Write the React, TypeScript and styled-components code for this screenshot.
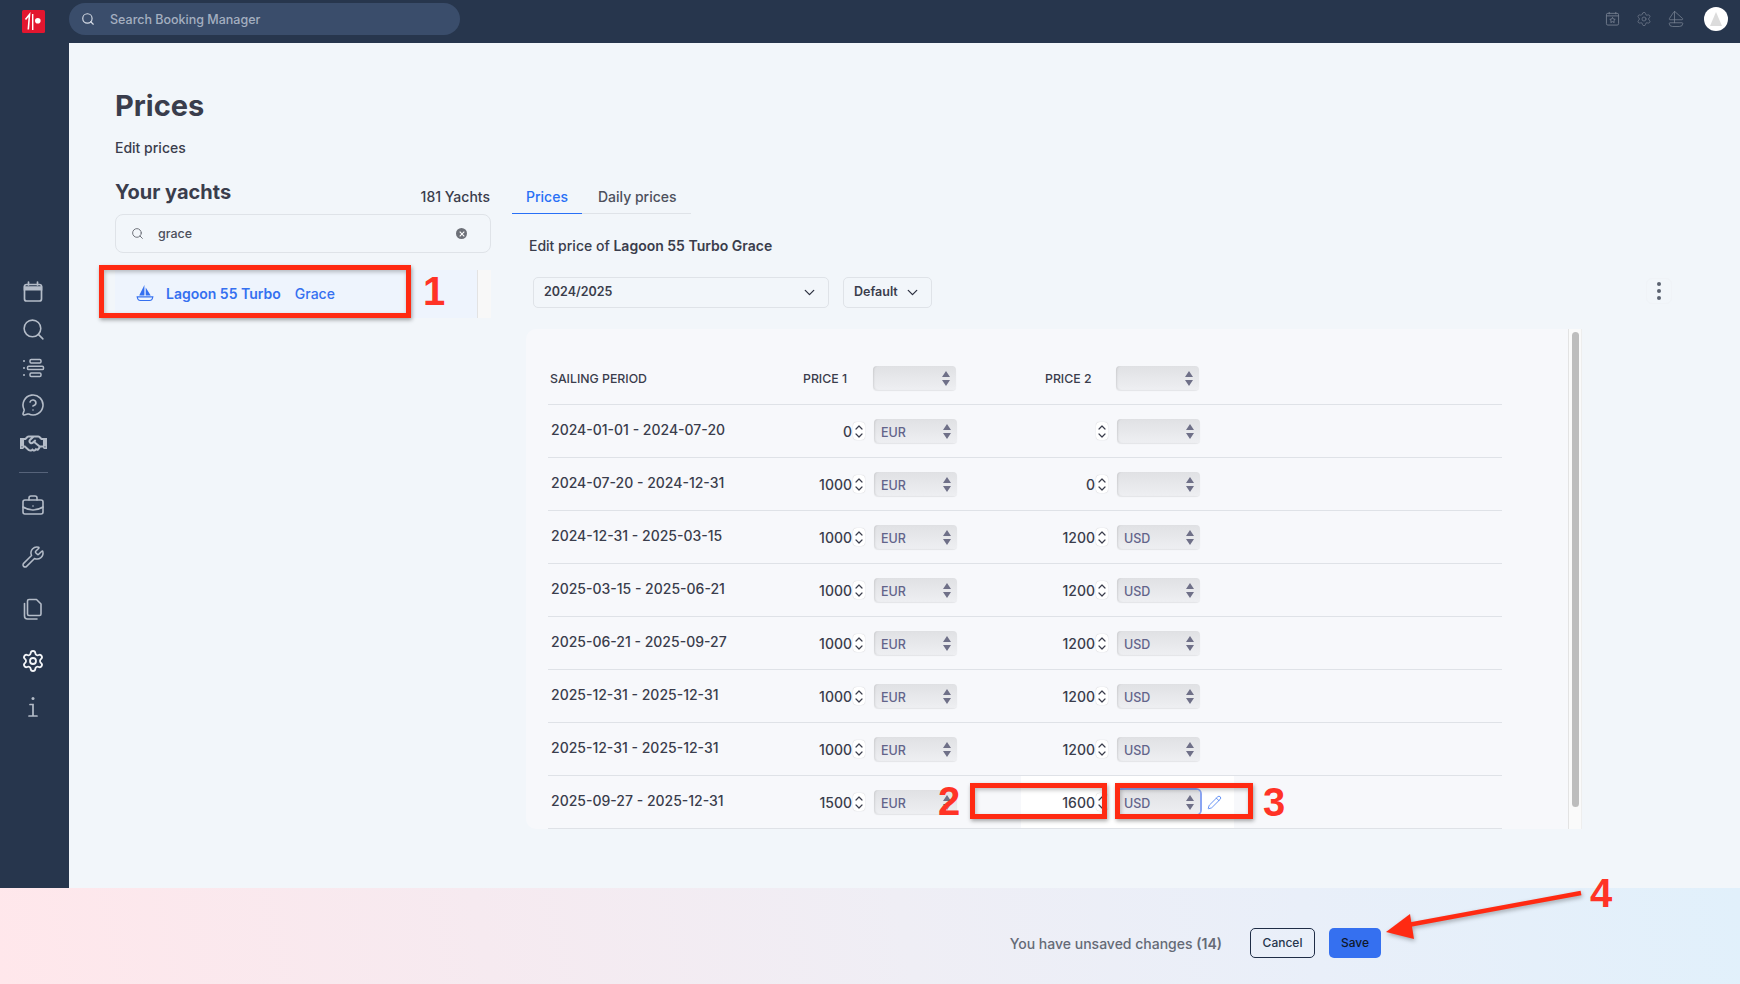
import React from "react";
import styled, { createGlobalStyle } from "styled-components";
import {
  BriefcaseBusiness,
  ChevronDown,
  MessageCircleQuestion,
  Pencil,
  Sailboat,
  Search,
  Settings,
  Wrench,
} from "lucide-react";
import { FaRegHandshake } from "react-icons/fa";

const rows = [
  { period: "2024-01-01 - 2024-07-20", price1: "0", cur1: "EUR", price2: "", cur2: "" },
  { period: "2024-07-20 - 2024-12-31", price1: "1000", cur1: "EUR", price2: "0", cur2: "" },
  { period: "2024-12-31 - 2025-03-15", price1: "1000", cur1: "EUR", price2: "1200", cur2: "USD" },
  { period: "2025-03-15 - 2025-06-21", price1: "1000", cur1: "EUR", price2: "1200", cur2: "USD" },
  { period: "2025-06-21 - 2025-09-27", price1: "1000", cur1: "EUR", price2: "1200", cur2: "USD" },
  { period: "2025-12-31 - 2025-12-31", price1: "1000", cur1: "EUR", price2: "1200", cur2: "USD" },
  { period: "2025-12-31 - 2025-12-31", price1: "1000", cur1: "EUR", price2: "1200", cur2: "USD" },
  { period: "2025-09-27 - 2025-12-31", price1: "1500", cur1: "EUR", price2: "1600", cur2: "USD", active: true },
];

const GlobalStyle = createGlobalStyle`
  * { box-sizing: border-box; }
  html, body { margin: 0; padding: 0; }
  body {
    font-family: "Inter", "Liberation Sans", sans-serif;
    color: #3a3d4c;
    background: #f2f6fa;
  }
`;

const CalendarIcon = () => (
  <svg width="24" height="24" viewBox="0 0 24 24" fill="none" stroke="currentColor" strokeWidth="1.7">
    <rect x="3.5" y="4.5" width="17" height="16.5" rx="2" />
    <path d="M3.5 7h17v2.6h-17z" fill="currentColor" />
    <path d="M7.5 2v3M16.5 2v3" strokeLinecap="round" />
  </svg>
);

const ListIcon = () => (
  <svg width="24" height="24" viewBox="0 0 24 24" fill="none" stroke="currentColor" strokeWidth="1.5">
    <rect x="9" y="3.5" width="11" height="3.4" rx="1.2" />
    <rect x="6.5" y="10.2" width="16" height="3.4" rx="1.2" />
    <rect x="9" y="17" width="11" height="3.4" rx="1.2" />
    <circle cx="3" cy="5" r="1" fill="currentColor" stroke="none" />
    <circle cx="3" cy="12" r="1" fill="currentColor" stroke="none" />
    <circle cx="3" cy="19" r="1" fill="currentColor" stroke="none" />
  </svg>
);

const FilesIcon = () => (
  <svg width="24" height="24" viewBox="0 0 24 24" fill="none" stroke="currentColor" strokeWidth="1.6" strokeLinejoin="round">
    <path d="M8 2.5h7.5l4.5 4.5v10a1.5 1.5 0 0 1-1.5 1.5H8A1.5 1.5 0 0 1 6.5 17V4A1.5 1.5 0 0 1 8 2.5z" />
    <path d="M3.5 6.5V19a3 3 0 0 0 3 3H16" strokeLinecap="round" />
  </svg>
);

const InfoIcon = () => (
  <svg width="24" height="24" viewBox="0 0 24 24" fill="none" stroke="currentColor" strokeWidth="1.7" strokeLinecap="round">
    <circle cx="12" cy="3.6" r="1.5" fill="currentColor" stroke="none" />
    <path d="M9 9.5h3V21M8 21h8" />
  </svg>
);

const BoatFilled = () => (
  <svg width="18" height="18" viewBox="0 0 18 18" fill="#3570f0">
    <path d="M8.4 1L8.4 11.5H3.2zM9.7 3.5l5 8H9.7z" />
    <path d="M1.2 12.8h15.6c-.3 2.5-1.5 3.7-3.2 3.7H4.4c-1.7 0-2.9-1.2-3.2-3.7z" fill="none" stroke="#3570f0" strokeWidth="1.2" />
  </svg>
);

const CalendarStar = () => (
  <svg width="15" height="15" viewBox="0 0 16 16" fill="none" stroke="currentColor" strokeWidth="0.9">
    <rect x="1.5" y="2.5" width="13" height="12.5" rx="1.5" />
    <path d="M1.5 5.2h13M4.5 1v2.5M11.5 1v2.5" />
    <path d="M8 6.8l.9 1.8 2 .3-1.45 1.4.35 2L8 11.35l-1.8.95.35-2L5.1 8.9l2-.3z" />
  </svg>
);

const Arrows = () => (
  <svg width="8" height="15" viewBox="0 0 8 15" fill="#6f7088">
    <path d="M4 0l4 6H0zM4 15L0 9h8z" />
  </svg>
);

const Spin = () => (
  <Spinner>
    <svg width="10" height="17" viewBox="0 0 10 17" fill="none" stroke="#3a3d4c" strokeWidth="1.2" strokeLinecap="round" strokeLinejoin="round">
      <path d="M2 6l3-3 3 3M2 11l3 3 3-3" />
    </svg>
  </Spinner>
);

const Select = ({ label, focused }: { label?: string; focused?: boolean }) => (
  <SelectBox $focused={focused}>
    <span>{label}</span>
    <Arrows />
  </SelectBox>
);

export default function App() {
  return (
    <Page>
      <GlobalStyle />
      <TopBar>
        <LogoSlot>
          <svg width="23" height="23" viewBox="0 0 23 23">
            <rect width="23" height="23" rx="1.5" fill="#e3162f" />
            <path d="M3.5 9.5L7.5 4.500L6.300 19.500" fill="none" stroke="#fff" strokeWidth="1.6" />
            <path d="M10.700 4v16" stroke="#fff" strokeWidth="1.4" />
            <circle cx="15.800" cy="10.700" r="2.800" fill="#fff" />
          </svg>
        </LogoSlot>
        <GlobalSearch>
          <Search size={14} strokeWidth={2} color="#d5dbe5" />
          <span>Search Booking Manager</span>
        </GlobalSearch>
        <TopIcons>
          <TopIcon><CalendarStar /></TopIcon>
          <TopIcon><Settings size={16} strokeWidth={1} /></TopIcon>
          <TopIcon><Sailboat size={18} strokeWidth={1} /></TopIcon>
          <Avatar>
            <svg width="12" height="14" viewBox="0 0 12 14" fill="#dcdcdc"><path d="M6 0l6 14H0z" /></svg>
          </Avatar>
        </TopIcons>
      </TopBar>

      <Body>
        <SideNav>
          <NavItem $gap={0}><CalendarIcon /></NavItem>
          <NavItem $gap={13}><Search size={25} strokeWidth={1.5} /></NavItem>
          <NavItem $gap={15}><ListIcon /></NavItem>
          <NavItem $gap={13}><MessageCircleQuestion size={24} strokeWidth={1.6} /></NavItem>
          <NavItem $gap={14}><FaRegHandshake size={27} /></NavItem>
          <NavDivider />
          <NavItem $gap={21}><BriefcaseBusiness size={24} strokeWidth={1.6} /></NavItem>
          <NavItem $gap={27}><Wrench size={24} strokeWidth={1.5} /></NavItem>
          <NavItem $gap={28}><FilesIcon /></NavItem>
          <NavItem $gap={28} $bright><Settings size={24} strokeWidth={1.8} /></NavItem>
          <NavItem $gap={22}><InfoIcon /></NavItem>
        </SideNav>

        <Main>
          <Title>Prices</Title>
          <Subtitle>Edit prices</Subtitle>
          <Columns>
            <LeftColumn>
              <YachtsHeader>
                <YachtsTitle>Your yachts</YachtsTitle>
                <YachtsCount>181 Yachts</YachtsCount>
              </YachtsHeader>
              <YachtSearch>
                <Search size={13} strokeWidth={1.8} color="#6d7078" />
                <span>grace</span>
                <ClearIcon>
                  <svg width="6" height="6" viewBox="0 0 6 6" stroke="#fff" strokeWidth="1.1"><path d="M.7.7l4.6 4.6M5.3.7L.7 5.3" /></svg>
                </ClearIcon>
              </YachtSearch>
              <YachtRow>
                <BoatFilled />
                <YachtModel>Lagoon 55 Turbo</YachtModel>
                <YachtName>Grace</YachtName>
                <ListStrip />
              </YachtRow>
            </LeftColumn>

            <RightColumn>
              <Tabs>
                <Tab $active>Prices</Tab>
                <Tab>Daily prices</Tab>
              </Tabs>
              <EditHeading>Edit price of <strong>Lagoon 55 Turbo Grace</strong></EditHeading>
              <Filters>
                <YearSelect>
                  <span>2024/2025</span>
                  <ChevronDown size={17} strokeWidth={1.8} color="#2c3040" />
                </YearSelect>
                <TypeSelect>
                  <span>Default</span>
                  <ChevronDown size={17} strokeWidth={1.8} color="#2c3040" />
                </TypeSelect>
                <Kebab>
                  <Dot />
                  <Dot />
                  <Dot />
                </Kebab>
              </Filters>

              <TableCard>
                <TableArea>
                  <HeaderRow>
                    <HeadPeriod>SAILING PERIOD</HeadPeriod>
                    <HeadPrice>PRICE 1</HeadPrice>
                    <Select />
                    <HeadPrice2>PRICE 2</HeadPrice2>
                    <Select />
                  </HeaderRow>
                  {rows.map((row, i) => (
                    <PriceRow key={i}>
                      <Period>{row.period}</Period>
                      <Amount $width={61}>{row.price1}</Amount>
                      <Spin />
                      <Select label={row.cur1} />
                      <SecondPrice $active={row.active}>
                        <Amount $width={74}>{row.price2}</Amount>
                        <Spin />
                        <Select label={row.cur2} focused={row.active} />
                        {row.active && (
                          <PencilSlot>
                            <Pencil size={15} strokeWidth={1.2} color="#3570f0" />
                          </PencilSlot>
                        )}
                      </SecondPrice>
                    </PriceRow>
                  ))}
                </TableArea>
                <ScrollTrack>
                  <ScrollThumb />
                </ScrollTrack>
              </TableCard>
            </RightColumn>
          </Columns>
        </Main>
      </Body>

      <Footer>
        <Unsaved>You have unsaved changes <b>(14)</b></Unsaved>
        <CancelButton>Cancel</CancelButton>
        <SaveButton>Save</SaveButton>
      </Footer>

      <RedBox $x={99} $y={265} $w={312} $h={53} />
      <RedBox $x={970} $y={783} $w={137} $h={36} />
      <RedBox $x={1115} $y={783} $w={138} $h={36} />
      <RedDigit $x={423} $y={268}>1</RedDigit>
      <RedDigit $x={938} $y={778}>2</RedDigit>
      <RedDigit $x={1263} $y={779}>3</RedDigit>
      <RedDigit $x={1590} $y={870}>4</RedDigit>
      <ArrowLayer width="220" height="60" viewBox="1380 888 220 60">
        <path d="M1581 893L1408 925" stroke="#ff2a12" strokeWidth="4.5" />
        <path d="M1386 932L1410 914L1414 939z" fill="#ff2a12" />
      </ArrowLayer>
    </Page>
  );
}

const Page = styled.div`
  position: relative;
  width: 1740px;
  height: 984px;
  overflow: hidden;
  display: flex;
  flex-direction: column;
`;

const TopBar = styled.header`
  height: 43px;
  flex: none;
  display: flex;
  align-items: center;
  background: #27364d;
`;

const LogoSlot = styled.div`
  width: 69px;
  flex: none;
  display: flex;
  justify-content: center;
  padding-right: 3px;
`;

const GlobalSearch = styled.div`
  width: 391px;
  height: 32px;
  margin-top: -5px;
  padding: 0 0 0 12px;
  display: flex;
  align-items: center;
  gap: 15px;
  border-radius: 16px;
  background: #3a4d6b;
  color: #a4afc0;
  font-size: 12.5px;
  font-weight: 500;
`;

const TopIcons = styled.div`
  margin-left: auto;
  padding-right: 12px;
  display: flex;
  align-items: center;
  color: #7a8494;
`;

const TopIcon = styled.div`
  width: 32px;
  display: flex;
  justify-content: center;
  margin-top: -6px;
`;

const Avatar = styled.div`
  width: 24px;
  height: 24px;
  margin-left: 12px;
  margin-top: -6px;
  border-radius: 50%;
  background: #fff;
  display: flex;
  align-items: center;
  justify-content: center;
`;

const Body = styled.div`
  flex: 1;
  min-height: 0;
  display: flex;
`;

const SideNav = styled.nav`
  width: 69px;
  flex: none;
  padding-top: 237px;
  display: flex;
  flex-direction: column;
  align-items: center;
  background: #27364d;
  padding-right: 3px;
`;

const NavItem = styled.div<{ $gap: number; $bright?: boolean }>`
  display: flex;
  height: 24px;
  align-items: center;
  justify-content: center;
  margin-top: ${(p) => p.$gap}px;
  color: ${(p) => (p.$bright ? "#f2f4f7" : "#b4bcc8")};
`;

const NavDivider = styled.div`
  width: 29px;
  height: 1px;
  margin-top: 17px;
  background: #56637a;
`;

const Main = styled.main`
  flex: 1;
  min-width: 0;
  padding: 45px 0 0 46px;
  background: #f2f6fa;
`;

const Title = styled.h1`
  margin: 0;
  font-size: 29px;
  line-height: 36px;
  font-weight: 700;
  color: #3a3d4c;
`;

const Subtitle = styled.p`
  margin: 15px 0 0;
  font-size: 14px;
  line-height: 18px;
  font-weight: 500;
`;

const Columns = styled.div`
  margin-top: 20px;
  display: flex;
`;

const LeftColumn = styled.section`
  width: 376px;
  flex: none;
`;

const YachtsHeader = styled.div`
  height: 30px;
  display: flex;
  align-items: center;
  justify-content: space-between;
`;

const YachtsTitle = styled.h2`
  margin: 0;
  font-size: 20px;
  line-height: 30px;
  font-weight: 700;
`;

const YachtsCount = styled.span`
  margin-top: 9px;
  padding-right: 1px;
  font-size: 14px;
  font-weight: 500;
`;

const YachtSearch = styled.div`
  height: 39px;
  margin-top: 7px;
  padding: 0 23px 0 15px;
  display: flex;
  align-items: center;
  gap: 14px;
  border: 1px solid #dfe3e8;
  border-radius: 8px;
  font-size: 12.5px;
  font-weight: 500;
  color: #4d505c;
`;

const ClearIcon = styled.div`
  margin-left: auto;
  width: 11px;
  height: 11px;
  border-radius: 50%;
  background: #6d7078;
  display: flex;
  align-items: center;
  justify-content: center;
`;

const YachtRow = styled.div`
  height: 48px;
  margin-top: 17px;
  padding: 0 0 2px 21px;
  display: flex;
  align-items: center;
  background: #eef4fd;
  font-size: 14px;
`;

const YachtModel = styled.span`
  margin-left: 12px;
  font-weight: 600;
  color: #3570f0;
`;

const YachtName = styled.span`
  margin-left: 14px;
  font-weight: 500;
  color: #3570f0;
`;

const ListStrip = styled.div`
  margin-left: auto;
  width: 14px;
  height: 48px;
  margin-bottom: -2px;
  background: #f8f8f8;
  border-left: 1px solid #e3e3e3;
`;

const RightColumn = styled.section`
  width: 1160px;
  margin-left: 21px;
  flex: none;
`;

const Tabs = styled.div`
  width: 179px;
  height: 37px;
  display: flex;
  border-bottom: 1px solid #dfe3e8;
`;

const Tab = styled.div<{ $active?: boolean }>`
  height: 37px;
  padding: 11px 14px 0 ${(p) => (p.$active ? 14 : 16)}px;
  font-size: 14px;
  line-height: 18px;
  font-weight: 500;
  color: ${(p) => (p.$active ? "#2970f6" : "#4d505c")};
  border-bottom: ${(p) => (p.$active ? "1.5px solid #2970f6" : "none")};
`;

const EditHeading = styled.p`
  margin: 23px 0 0 17px;
  font-size: 14px;
  line-height: 18px;
  font-weight: 500;
  strong {
    font-weight: 600;
  }
`;

const Filters = styled.div`
  margin-top: 22px;
  padding-left: 21px;
  display: flex;
  align-items: center;
  height: 31px;
`;

const YearSelect = styled.div`
  width: 296px;
  height: 31px;
  padding: 0 10px 2px 10px;
  display: flex;
  align-items: center;
  justify-content: space-between;
  border: 1px solid #dfe3e8;
  border-radius: 5px;
  font-size: 12.5px;
  font-weight: 600;
  svg {
    margin-bottom: -2px;
  }
`;

const TypeSelect = styled(YearSelect)`
  width: 89px;
  margin-left: 14px;
`;

const Kebab = styled.div`
  margin-left: auto;
  margin-top: -4px;
  width: 26px;
  height: 26px;
  display: flex;
  flex-direction: column;
  align-items: center;
  justify-content: center;
  gap: 3px;
  border-radius: 6px;
  border: 1px solid #f0f3f7;
`;

const Dot = styled.span`
  width: 4px;
  height: 4px;
  border-radius: 50%;
  background: #5b6270;
`;

const TableCard = styled.div`
  margin: 21px 0 0 14px;
  width: 1056px;
  height: 500px;
  display: flex;
  overflow: hidden;
  background: #f7f8fb;
  border-radius: 10px 0 0 10px;
`;

const TableArea = styled.div`
  flex: 1;
  padding: 23px 0 0 22px;
`;

const ScrollTrack = styled.div`
  width: 14px;
  flex: none;
  padding: 3px 2px 0 3px;
  background: #fafafa;
  border-left: 1px solid #e3e3e3;
  border-right: 1px solid #eeeeee;
`;

const ScrollThumb = styled.div`
  height: 475px;
  border-radius: 4px;
  background: #bdbdbd;
`;

const HeaderRow = styled.div`
  width: 954px;
  height: 53px;
  display: flex;
  align-items: center;
  border-bottom: 1px solid #dfe2e7;
  font-size: 12.3px;
  font-weight: 500;
`;

const HeadPeriod = styled.span`
  width: 255px;
  padding-left: 2px;
`;

const HeadPrice = styled.span`
  width: 70px;
`;

const HeadPrice2 = styled.span`
  margin-left: 89px;
  width: 71px;
`;

const PriceRow = styled.div`
  width: 954px;
  height: 53px;
  display: flex;
  align-items: center;
  border-bottom: 1px solid #dfe2e7;
`;

const Period = styled.span`
  width: 243px;
  padding-left: 3px;
  margin-top: -3px;
  font-size: 14px;
  font-weight: 500;
  color: #3a3d4c;
`;

const Amount = styled.span<{ $width: number }>`
  width: ${(p) => p.$width}px;
  text-align: right;
  font-size: 14px;
  font-weight: 500;
`;

const Spinner = styled.span`
  width: 12px;
  height: 18px;
  margin: 0 9px 0 1px;
  display: flex;
  align-items: center;
  justify-content: center;
  background: #fff;
  border-radius: 4px;
  box-shadow: 0 0 1px rgba(0, 0, 0, 0.25);
`;

const SelectBox = styled.div<{ $focused?: boolean }>`
  width: 83px;
  height: 24px;
  flex: none;
  padding: 0 6px 0 7px;
  display: flex;
  align-items: center;
  justify-content: space-between;
  border-radius: 4px;
  background: linear-gradient(#e0e1e4, #eeeff2);
  box-shadow: ${(p) =>
    p.$focused
      ? "0 0 0 2px #8aa4f2"
      : "0 1px 1px rgba(0, 0, 0, 0.08), inset 2px 0 2px -1px rgba(0, 0, 0, 0.1)"};
  font-size: 12.5px;
  font-weight: 500;
  color: #62648a;
  span {
    margin-top: 3px;
  }
`;

const SecondPrice = styled.div<{ $active?: boolean }>`
  width: 213px;
  height: 100%;
  margin-left: 64px;
  display: flex;
  align-items: center;
  background: ${(p) => (p.$active ? "#fff" : "transparent")};
`;

const PencilSlot = styled.span`
  display: flex;
  margin-left: 7px;
`;

const Footer = styled.footer`
  height: 96px;
  flex: none;
  padding: 40px 359px 0 0;
  display: flex;
  justify-content: flex-end;
  background: linear-gradient(
    78deg,
    #ffe7eb 0%,
    #f6eaf0 28%,
    #efeef5 52%,
    #e9eff9 75%,
    #e1f0fb 100%
  );
`;

const Unsaved = styled.span`
  margin: 7px 28px 0 0;
  font-size: 14px;
  line-height: 18px;
  font-weight: 500;
  color: #656a76;
  b {
    font-weight: 600;
  }
`;

const CancelButton = styled.div`
  width: 65px;
  height: 30px;
  padding-bottom: 1px;
  border: 1px solid #1f2d46;
  border-radius: 5px;
  display: flex;
  align-items: center;
  justify-content: center;
  font-size: 12px;
  font-weight: 500;
  color: #27364d;
`;

const SaveButton = styled.div`
  width: 52px;
  height: 30px;
  margin-left: 14px;
  padding-bottom: 1px;
  border-radius: 5px;
  display: flex;
  align-items: center;
  justify-content: center;
  background: #3570f0;
  font-size: 12px;
  font-weight: 500;
  color: #10182a;
`;

const RedBox = styled.div<{ $x: number; $y: number; $w: number; $h: number }>`
  position: absolute;
  left: ${(p) => p.$x}px;
  top: ${(p) => p.$y}px;
  width: ${(p) => p.$w}px;
  height: ${(p) => p.$h}px;
  border: 5px solid #ff2a12;
  box-shadow: 1px 2px 4px rgba(0, 0, 0, 0.35), inset 1px 2px 4px rgba(0, 0, 0, 0.25);
`;

const RedDigit = styled.span<{ $x: number; $y: number }>`
  position: absolute;
  left: ${(p) => p.$x}px;
  top: ${(p) => p.$y}px;
  font-family: "Liberation Sans", sans-serif;
  font-size: 40px;
  line-height: 46px;
  font-weight: 700;
  color: #ff3326;
`;

const ArrowLayer = styled.svg`
  position: absolute;
  left: 1380px;
  top: 888px;
  filter: drop-shadow(1px 2px 2px rgba(0, 0, 0, 0.3));
`;
